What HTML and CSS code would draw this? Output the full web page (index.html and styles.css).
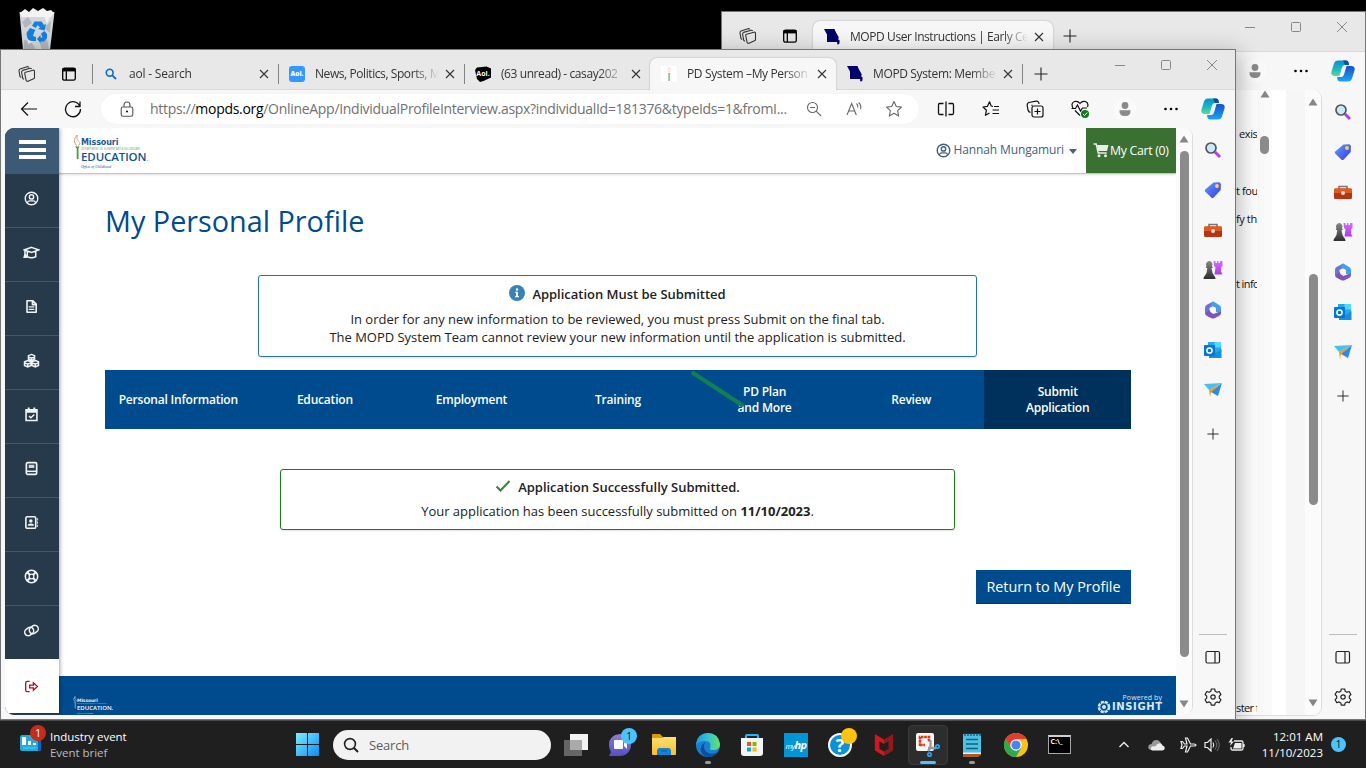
FILE: index.html
```html
<!DOCTYPE html>
<html lang="en">
<head>
<meta charset="utf-8">
<title>PD System – My Personal Profile</title>
<link rel="stylesheet" href="styles.css">
</head>
<body>
<svg class="defs" aria-hidden="true">
  <defs>
    <linearGradient id="gTeal" x1="0" y1="0" x2="0" y2="1"><stop offset="0" stop-color="#0a8fd0"/><stop offset=".5" stop-color="#16b4c8"/><stop offset="1" stop-color="#5fd990"/></linearGradient>
    <linearGradient id="gBlue" x1="0" y1="0" x2="0" y2="1"><stop offset="0" stop-color="#1b50c8"/><stop offset="1" stop-color="#16a7f5"/></linearGradient>
    <linearGradient id="gTag" x1="0" y1="0" x2="1" y2="1"><stop offset="0" stop-color="#5fa2ff"/><stop offset="1" stop-color="#3a35e0"/></linearGradient>
    <linearGradient id="gWin" x1="0" y1="0" x2="1" y2="1"><stop offset="0" stop-color="#80ecff"/><stop offset="1" stop-color="#0a8cf5"/></linearGradient>
    <linearGradient id="gEdge" x1="0" y1="0" x2="1" y2="0"><stop offset="0" stop-color="#1a9be0"/><stop offset=".5" stop-color="#30c3d5"/><stop offset="1" stop-color="#6be35a"/></linearGradient>
    <linearGradient id="gRook" x1="0" y1="0" x2="0" y2="1"><stop offset="0" stop-color="#d56bff"/><stop offset="1" stop-color="#a93bf0"/></linearGradient>
    <linearGradient id="gPawn" x1="0" y1="0" x2="0" y2="1"><stop offset="0" stop-color="#888"/><stop offset="1" stop-color="#2e2e2e"/></linearGradient>
    <linearGradient id="gFold" x1="0" y1="0" x2="0" y2="1"><stop offset="0" stop-color="#ffdf70"/><stop offset="1" stop-color="#f9bd2c"/></linearGradient>
    <linearGradient id="gChat" x1="0" y1="0" x2="0" y2="1"><stop offset="0" stop-color="#8b7fd0"/><stop offset="1" stop-color="#5350c8"/></linearGradient>
  </defs>
  <symbol id="workspaces" viewBox="0 0 18 18"><g fill="none" stroke="#333" stroke-width="1.1" stroke-linejoin="round"><path d="M7.5 7.2 15 5.2q1.5-.3 1.500 1.200v6q0 1-1 1.400L10 16.300q-1.500.3-1.900-1L6.700 8.500q-.2-1 .8-1.300Z"/><path d="M6 14.300 4.800 13.500 3.600 7.300q-.2-1.500 1-1.900L12 3.300q1-.2 1.700.6"/><path d="M3.300 12.500 2 11.600 1 6q-.1-1.600 1-2L9 1.700q1-.2 1.800.6"/></g></symbol>
  <symbol id="tabpanel" viewBox="0 0 16 16"><rect x="1.700" y="2.200" width="12.600" height="12" rx="1.800" fill="none" stroke="#000" stroke-width="1.300"/><path d="M1.500 2h13v3.400h-13Z"/><path d="M5.300 5v9" stroke="#000" stroke-width="1.300"/></symbol>
  <symbol id="x" viewBox="0 0 10 10"><path d="m1 1 8 8M9 1 1 9" stroke="#333" stroke-width="1.100"/></symbol>
  <symbol id="wx" viewBox="0 0 12 12"><path d="m1 1 10 10M11 1 1 11" stroke="#888" stroke-width="1"/></symbol>
  <symbol id="wmax" viewBox="0 0 12 12"><rect x="1.500" y="1.500" width="9" height="9" rx="1" fill="none" stroke="#888"/></symbol>
  <symbol id="wmin" viewBox="0 0 12 12"><path d="M1 6.500h10" stroke="#888"/></symbol>
  <symbol id="plus" viewBox="0 0 14 14"><path d="M7 .5v13M.5 7h13" stroke="#222" stroke-width="1.100"/></symbol>
  <symbol id="lens" viewBox="0 0 12 12"><circle cx="4.700" cy="4.700" r="3.400" fill="none" stroke="#0b6cc8" stroke-width="1.600"/><path d="m7.300 7.300 3.700 3.700" stroke="#0b6cc8" stroke-width="1.800"/></symbol>
  <symbol id="mo" viewBox="0 0 16 16"><path d="M0 0h10.500l1 2.500 3.200 5.800-.5 2 1.500 1.500-.4 3-1.500 1-.8-1.600.3-1.100H3V5.500Z" fill="#02026b"/></symbol>
  <symbol id="torch" viewBox="0 0 16 16"><path d="M0 0h16v16H0Z" fill="#fff"/><path d="M8 1.500q-2.500 2.500-.2 4.800M8.300 1.500q2.200 2.500.2 4.800" fill="none" stroke="#f3cfba" stroke-width=".8"/><path d="M6.800 7h2.700L9 8.500V15H7.300V8.500Z" fill="#8cc784"/></symbol>
  <symbol id="aolhat" viewBox="0 0 16 16"><path d="M2 1.500 11.500.5 16 2.500v9l-7.500 3.500L5 16l-3-3L0 4Z"/></symbol>
  <symbol id="back" viewBox="0 0 18 18"><path d="M17 9H2m6-6.500L1.500 9 8 15.500" fill="none" stroke="#111" stroke-width="1.200"/></symbol>
  <symbol id="reload" viewBox="0 0 18 18"><path d="M16 6.500A7.500 7.500 0 1 0 16.500 9M16 1.500v5h-5" fill="none" stroke="#111" stroke-width="1.300"/></symbol>
  <symbol id="lock" viewBox="0 0 14 16"><rect x="1.200" y="6" width="11.600" height="9.200" rx="1.700" fill="none" stroke="#555" stroke-width="1.100"/><path d="M4 6V4q0-3 3-3t3 3v2" fill="none" stroke="#555" stroke-width="1.100"/><circle cx="7" cy="10.500" r="1"/></symbol>
  <symbol id="zoomout" viewBox="0 0 16 16"><g fill="none" stroke="#666" stroke-width="1.100"><circle cx="6.500" cy="6.500" r="5"/><path d="m10.200 10.200 4.800 4.800M4 6.500h5"/></g></symbol>
  <symbol id="read" viewBox="0 0 17 16"><g fill="none" stroke="#666" stroke-width="1.100"><path d="M1 14 5.700 2.500 10.300 14M2.700 10h6M10.500 2.500q1.800 1.800 1.300 4.200M12.600 1.500q3 2.700 2 6.700"/></g></symbol>
  <symbol id="star" viewBox="0 0 18 18"><path d="m9 1.500 2.300 5 5.200.6-3.900 3.600 1.100 5.300L9 13.300 4.300 16l1.100-5.300L1.500 7.100l5.200-.6Z" fill="none" stroke="#666" stroke-width="1.100" stroke-linejoin="round"/></symbol>
  <symbol id="split" viewBox="0 0 18 16"><path d="M6.500 2.500h-4Q1.500 2.500 1.500 4v8q0 1.500 1 1.500h4M11.500 2.500h4q1 0 1 1.500v8q0 1.500-1 1.500h-4M9 .5v15" fill="none" stroke="#111" stroke-width="1.300"/></symbol>
  <symbol id="favs" viewBox="0 0 18 18"><path d="M11 6.500 9.200 6 7.500 1.800 5.500 6.300 1 7l3.400 3.300-1 5L7.500 13M12 6.500h5M10.500 10h6.500M10.500 13.500h6.500" fill="none" stroke="#111" stroke-width="1.200" stroke-linejoin="round"/></symbol>
  <symbol id="coll" viewBox="0 0 18 18"><g fill="none" stroke="#111" stroke-width="1.200"><rect x="6" y="6" width="11" height="11" rx="2"/><path d="M11.500 8.500v6M8.500 11.500h6M4.500 12.500Q2.500 12 2 10L1.200 5.500Q1 3 3 2.500l7-1.300q2-.2 2.800 1.500L13 4M6 6V4.800"/></g></symbol>
  <symbol id="health" viewBox="0 0 18 18"><path d="M2 8Q-.500 3 3.500 1.500 7 .7 9 3.500q2-2.800 5.500-2 3.500 1.500 2 5.500M4 10.500l5 5M.5 8.500h4L6.500 5l3 6 2-3h4.500" fill="none" stroke="#111" stroke-width="1.200"/><circle cx="14" cy="14" r="4" fill="#147a1e"/><path d="m12 14 1.500 1.500 2.700-3" fill="none" stroke="#fff" stroke-width="1"/></symbol>
  <symbol id="avatar" viewBox="0 0 24 24"><circle cx="12" cy="12" r="11.500" fill="#fafafa"/><circle cx="12" cy="8.500" r="3.400" fill="#8a8a8a"/><path d="M6.500 13.200h11q.5 5.800-5.500 5.800t-5.500-5.800Z" fill="#8a8a8a"/></symbol>
  <symbol id="dots" viewBox="0 0 16 4"><circle cx="2.500" cy="2" r="1.300"/><circle cx="8" cy="2" r="1.300"/><circle cx="13.500" cy="2" r="1.300"/></symbol>
  <symbol id="copilot" viewBox="0 0 24 24"><path d="M7 1.500h8q2 0 2.500 2l.5 2.500h-4q-2.300 0-3 2.500L8.500 17H4Q-.500 17 .5 12.500L3 4.500Q4 1.500 7 1.500Z" fill="url(#gTeal)"/><path d="M17 22.500H9q-2 0-2.500-2L6 18h4q2.300 0 3-2.500L15.500 7H20q4.500 0 3.500 4.500L21 19.500q-1 3-4 3Z" fill="url(#gBlue)"/><path d="M12 1.500h3.500q1.500 0 2 2L18 6h-4Z" fill="#174a9e"/></symbol>
  <symbol id="s-search" viewBox="0 0 18 18"><path d="m11 11 5 5" stroke="#b63cf5" stroke-width="3"/><circle cx="7" cy="7" r="5" fill="#c9e9fb" stroke="#555" stroke-width="1.700"/></symbol>
  <symbol id="s-tag" viewBox="0 0 18 18"><path d="M9.500 1.500 15.500 1.200 17 3l-.3 6-7.200 7.700q-1 .8-2 0L1.200 10.500q-.8-1 0-2Z" fill="url(#gTag)"/><circle cx="13" cy="5" r="1.900" fill="#ffd34d"/></symbol>
  <symbol id="s-box" viewBox="0 0 20 16"><path d="M6 5V2.500h8V5" fill="none" stroke="#777" stroke-width="1.600"/><rect x="1" y="4.500" width="18" height="10.500" rx="1.500" fill="#b83410"/><path d="M1 5.500q0-1 1-1h16q1 0 1 1V9H1Z" fill="#e15a20"/><circle cx="10" cy="9" r="2" fill="#ddd"/></symbol>
  <symbol id="s-chess" viewBox="0 0 19 20"><path d="M10 1h2v2h1.500V1H15v2h1.500V1H19v5l-1.300 1v5l1.300 2.500h-8L12 7l-1.500-1Z" fill="url(#gRook)"/><path d="M3 6a3.200 3.200 0 1 1 5.500 0l.8 2H8l1 5 1.500 2.500q1.500 1 1.500 3.500H0q0-2.500 1.500-3.500L3 13l.8-5H2.200Z" fill="url(#gPawn)"/></symbol>
  <symbol id="s-365" viewBox="0 0 18 18"><path d="M9 .5 2.500 4Q1 5 1 7v5l4.500 2.800V7L13 3Z" fill="#6d72d8"/><path d="m9 .5 6.500 3.700Q17 5 17 7v5.500L12 11V7L6.500 4Z" fill="#43a0e8"/><path d="M1 12.500 5.500 9 9 13l8-2.500v2Q16.500 14 15 15l-4.500 2.300q-1.500.6-3 0L3 15q-1.600-1-2-2.500Z" fill="#8055b8"/><circle cx="9" cy="9" r="3" fill="#f7f7f7"/></symbol>
  <symbol id="s-outlook" viewBox="0 0 18 18"><path d="M4 1h13v14H4Z" fill="#28a8ea"/><path d="M10.500 1H17v5.500h-6.500Z" fill="#50d9ff"/><path d="m5 8 7 4 5.500-4v9H5Z" fill="#1490df"/><rect x="0" y="4" width="11" height="11" rx="1" fill="#0078d4"/><circle cx="5.500" cy="9.500" r="2.600" fill="none" stroke="#fff" stroke-width="1.500"/></symbol>
  <symbol id="s-plane" viewBox="0 0 18 16"><path d="M0 2 18 1 5 8Z" fill="#46c0f0"/><path d="M5 8 18 1 7 10l-1 5Z" fill="#f29a1a"/><path d="m7 10 11-9-4 13Z" fill="#2d8ae8"/></symbol>
  <symbol id="panel" viewBox="0 0 16 16"><rect x="1" y="2.500" width="13.500" height="11.500" rx="1.500" fill="none" stroke="#222" stroke-width="1.200"/><path d="M10 2.500V14" stroke="#222" stroke-width="1.200"/></symbol>
  <symbol id="gear" viewBox="0 0 18 18"><path d="M7.300 1h3.400l.5 2.300 1.800 1 2.200-.8 1.700 3-1.600 1.600v2l1.600 1.600-1.700 3-2.200-.8-1.800 1-.5 2.300H7.300l-.5-2.300-1.800-1-2.200.8-1.700-3 1.600-1.600v-2L1.100 6.500l1.700-3 2.200.8 1.800-1Z" fill="none" stroke="#222" stroke-width="1.200" stroke-linejoin="round"/><circle cx="9" cy="9" r="2.200" fill="none" stroke="#222" stroke-width="1.200"/></symbol>
  <symbol id="up" viewBox="0 0 10 8"><path d="M5 .5 9.500 7.500h-9Z" fill="#868686"/></symbol>
  <symbol id="down" viewBox="0 0 10 8"><path d="M5 7.500 9.500.5h-9Z" fill="#868686"/></symbol>
  <symbol id="n-user" viewBox="0 0 16 16"><g fill="none" stroke="currentColor" stroke-width="1.500"><circle cx="8" cy="8" r="6.700"/><circle cx="8" cy="6.300" r="2.300"/><path d="M3.500 12.500q.8-2 2.700-2h3.600q1.900 0 2.700 2"/></g></symbol>
  <symbol id="n-grad" viewBox="0 0 18 16"><path d="m9 2.500 7.800 2.800L9 8 1.200 5.300ZM4.500 7v5.500q4.500 2 9 0V7M2 6v4l-.8 3h2L2.500 10" fill="none" stroke="currentColor" stroke-width="1.600"/></symbol>
  <symbol id="n-doc" viewBox="0 0 16 16"><path d="M3.200 1.800h6L13 5.500v8.700H3.200ZM9 2v4h4" fill="none" stroke="currentColor" stroke-width="1.700" stroke-linejoin="round"/><path d="M5 8.500h6M5 11h6" stroke="currentColor" stroke-width="1.300"/></symbol>
  <symbol id="n-cubes" viewBox="0 0 18 16"><g fill="none" stroke="currentColor" stroke-width="1.500"><path d="m9 1.500 3.300 1.300v3.700L9 8 5.700 6.500V2.800ZM5.700 4.400 9 5.300l3.300-.9M9 5v3M5 8l3.500 1.300v4L5 14.800l-3.500-1.500v-4ZM1.500 10.700l3.500 1 3.500-1M5 11.500v3M13 8l3.500 1.300v4L13 14.800l-3.500-1.500v-4ZM9.500 10.700l3.500 1 3.500-1M13 11.500v3"/></g></symbol>
  <symbol id="n-cal" viewBox="0 0 16 16"><path d="M2.200 3h11.600v11.400H2.200Z" fill="none" stroke="currentColor" stroke-width="1.700"/><path d="M2 2.500h12V6H2ZM4 .5h2V3H4ZM10 .5h2V3h-2Z" fill="currentColor"/><path d="m5.300 9.500 2 2 3.700-3.600" fill="none" stroke="currentColor" stroke-width="1.500"/></symbol>
  <symbol id="n-book" viewBox="0 0 16 16"><rect x="2.500" y="1.800" width="11" height="12.400" rx="1.500" fill="none" stroke="currentColor" stroke-width="1.800"/><path d="M5 4h6v3.500H5Z" fill="currentColor" opacity=".85"/><path d="M2.500 11h11" stroke="currentColor" stroke-width="1.600"/></symbol>
  <symbol id="n-addr" viewBox="0 0 16 16"><rect x="2" y="1.800" width="10.500" height="12.400" rx="1.500" fill="none" stroke="currentColor" stroke-width="1.700"/><circle cx="7.300" cy="6.300" r="1.900" fill="currentColor"/><path d="M4 11.500q0-2.500 3.300-2.500t3.300 2.500Z" fill="currentColor"/><path d="M14.300 3.500v2.300M14.300 7v2.300M14.300 10.500v2.300" stroke="#d9cdb0" stroke-width="1.400"/></symbol>
  <symbol id="n-ring" viewBox="0 0 16 16"><g fill="none" stroke="currentColor"><circle cx="8" cy="8" r="6.600" stroke-width="1.600"/><circle cx="8" cy="8" r="2.500" stroke-width="1.300"/><path d="m3.300 3.300 3 3M12.700 3.300l-3 3M3.300 12.700l3-3M12.700 12.700l-3-3" stroke-width="2.200"/></g></symbol>
  <symbol id="n-link" viewBox="0 0 18 16"><g fill="none" stroke="currentColor" stroke-width="1.600"><rect x="6.500" y="3.200" width="10" height="7.500" rx="3.700" transform="rotate(-35 11.500 7)"/><rect x="1.500" y="5.300" width="10" height="7.500" rx="3.700" transform="rotate(-35 6.500 9)"/></g></symbol>
  <symbol id="n-out" viewBox="0 0 16 16"><path d="M6 2.500H3.500Q1.800 2.500 1.800 4.200v7.600q0 1.700 1.700 1.700H6M6 6.500h4V4l4.300 4L10 12V9.500H6Z" fill="none" stroke="currentColor" stroke-width="1.400"/></symbol>
  <symbol id="cart" viewBox="0 0 16 15"><path d="M.5 1h2.700l2 9h8.500" fill="none" stroke="#e6efe3" stroke-width="1.500"/><path d="M4 2h11.500l-1.500 6H5.200Z" fill="#e6efe3"/><circle cx="6" cy="12.700" r="1.500" fill="#e6efe3"/><circle cx="12.500" cy="12.700" r="1.500" fill="#e6efe3"/></symbol>
  <symbol id="logotorch" viewBox="0 0 8 28"><path d="M4 1Q-1 7 3.500 11.500M4.500 1q-2 4 1 6.500T5 11.500" fill="none" stroke="#d3a57b" stroke-width="1"/><path d="M1.800 12.500h4.700l-1 2V25H3.700V14.500Z" fill="#4b9d3e"/></symbol>
  <symbol id="w-torch" viewBox="0 0 8 28"><path d="M4 1Q-1 7 3.500 11.500M4.500 1q-2 4 1 6.500T5 11.500" fill="none" stroke="#b9cde0" stroke-width="1.300"/><path d="M1.800 12.500h4.700l-1 2V25H3.500V14.500Z" fill="#7fa5c8"/></symbol>
</svg>

<main class="desktop">
  <svg class="bin" viewBox="0 0 38 42"><path d="M1.500 4 5 42h27l4.500-38Z" fill="#d3d7d9"/><path d="m2 5 5-4 4 3 4-4 5 3 5-3 4 3 4-1 3 3-3 4H4Z" fill="#f3f4f5"/><path d="m4 14 6-5 4 6-7 5Zm22 6 7-7-1 12ZM6 32l7 1 5 9H6Zm15 1 8-2 2 11h-7Z" fill="#b1b7bb"/><path d="m9 28 5-3 2 8-6 3Zm17-20 6 1-3 7Z" fill="#eef0f1"/><path d="m14 18 2.500-4.500h7L26 17l2-1-1.500 6.500L20 21l2-1.500-2.500-2.500-1.500 3ZM8.500 25l1-1.500L12 20l5.500 2-1.200 2-1.300 4 3 1v4h-4.500q-4-.5-4.500-4.500Zm18-2L29 26v4l-3 3.500h-3.500V35L19 31l3.500-4v2.500h2l-1.500-4Z" fill="#1380e0"/></svg>

  <section class="window rear">
    <div class="tabstrip">
      <div class="lead"><svg class="i18"><use href="#workspaces"/></svg><svg class="i16"><use href="#tabpanel"/></svg></div>
      <div class="tab active"><svg class="i16"><use href="#mo"/></svg><span class="tt"><span class="t5">MOPD User Instructions | Early Ce</span></span><svg class="i10"><use href="#x"/></svg></div>
      <svg class="newtab"><use href="#plus"/></svg>
      <div class="controls"><svg><use href="#wmin"/></svg><svg><use href="#wmax"/></svg><svg><use href="#wx"/></svg></div>
    </div>
    <div class="toolbar"><span class="c46"><svg class="i24"><use href="#avatar"/></svg></span><span class="c46"><svg class="idots"><use href="#dots"/></svg></span><span class="c38"><svg class="i24"><use href="#copilot"/></svg></span></div>
    <div class="body">
      <div class="rearpage">
        <div class="snips"><p class="p1">exis</p><p class="p2">t fou</p><p class="p3">fy th</p><p class="p4">t info</p><p class="p5">ster f</p></div>
        <div class="innerscroll"><svg class="arrow"><use href="#up"/></svg><i></i></div>
        <div class="gutter"></div>
        <div class="scroll"><svg class="arrow"><use href="#up"/></svg><i></i><svg class="arrow"><use href="#down"/></svg></div>
      </div>
      <aside class="edgebar"><svg class="i18"><use href="#s-search"/></svg><svg class="i18"><use href="#s-tag"/></svg><svg class="i20"><use href="#s-box"/></svg><svg class="i20"><use href="#s-chess"/></svg><svg class="i18"><use href="#s-365"/></svg><svg class="i18"><use href="#s-outlook"/></svg><svg class="i18"><use href="#s-plane"/></svg><svg class="i12"><use href="#plus"/></svg><span class="rule"></span><svg class="i16"><use href="#panel"/></svg><svg class="i18 gear"><use href="#gear"/></svg></aside>
    </div>
  </section>

  <section class="window front">
    <div class="tabstrip">
      <div class="lead"><svg class="i18"><use href="#workspaces"/></svg><svg class="i16"><use href="#tabpanel"/></svg></div>
      <div class="tab sep"><svg class="i12 fav"><use href="#lens"/></svg><span class="tt"><span class="t1">aol - Search</span></span><svg class="i10"><use href="#x"/></svg></div>
      <div class="tab sep"><span class="aol">Aol.</span><span class="tt"><span class="t2">News, Politics, Sports, M</span></span><svg class="i10"><use href="#x"/></svg></div>
      <div class="tab sep"><span class="aolm"><svg class="i16"><use href="#aolhat"/></svg><b>Aol.</b></span><span class="tt"><span class="t3">(63 unread) - casay202</span></span><svg class="i10"><use href="#x"/></svg></div>
      <div class="tab active"><svg class="i16"><use href="#torch"/></svg><span class="tt"><span class="t4">PD System –My Person</span></span><svg class="i10"><use href="#x"/></svg></div>
      <div class="tab"><svg class="i16"><use href="#mo"/></svg><span class="tt"><span class="t6">MOPD System: Membe</span></span><svg class="i10"><use href="#x"/></svg></div>
      <span class="tabend"></span>
      <svg class="newtab"><use href="#plus"/></svg>
      <div class="controls"><svg><use href="#wmin"/></svg><svg><use href="#wmax"/></svg><svg><use href="#wx"/></svg></div>
    </div>
    <div class="toolbar">
      <span class="c56"><svg class="i18"><use href="#back"/></svg></span><span class="c44 reload"><svg class="i18"><use href="#reload"/></svg></span>
      <div class="address"><svg class="lock"><use href="#lock"/></svg><span class="url">https://<b>mopds.org</b>/OnlineApp/IndividualProfileInterview.aspx?individualId=181376&amp;typeIds=1&amp;fromI...</span><span class="c40"><svg class="i16"><use href="#zoomout"/></svg></span><span class="c40"><svg class="i17"><use href="#read"/></svg></span><span class="c40"><svg class="i18"><use href="#star"/></svg></span></div>
      <div class="tools"><span class="c44"><svg class="i18"><use href="#split"/></svg></span><span class="c44"><svg class="i18"><use href="#favs"/></svg></span><span class="c44"><svg class="i18"><use href="#coll"/></svg></span><span class="c44"><svg class="i18"><use href="#health"/></svg></span><span class="c46"><svg class="i24"><use href="#avatar"/></svg></span><span class="c46"><svg class="idots"><use href="#dots"/></svg></span><span class="c38"><svg class="i24"><use href="#copilot"/></svg></span></div>
    </div>
    <div class="body">
      <div class="page">
        <nav class="sidenav">
          <div class="burger"><i></i><i></i><i></i></div>
          <a><svg><use href="#n-user"/></svg></a><a><svg class="wide"><use href="#n-grad"/></svg></a><a><svg><use href="#n-doc"/></svg></a><a><svg class="wide"><use href="#n-cubes"/></svg></a><a><svg><use href="#n-cal"/></svg></a><a><svg><use href="#n-book"/></svg></a><a><svg><use href="#n-addr"/></svg></a><a><svg><use href="#n-ring"/></svg></a><a><svg class="wide"><use href="#n-link"/></svg></a><a class="logout"><svg><use href="#n-out"/></svg></a>
        </nav>
        <div class="content">
          <header class="top">
            <div class="logo"><svg><use href="#logotorch"/></svg><div class="words"><span class="l1">Missouri</span><span class="l2">DEPARTMENT OF ELEMENTARY &amp; SECONDARY</span><span class="l3">EDUCATION<small>.</small></span><span class="l4">Office of Childhood</span></div></div>
            <div class="user"><svg class="uicon"><use href="#n-user"/></svg><span>Hannah Mungamuri</span><i></i></div>
            <div class="cart"><svg><use href="#cart"/></svg><span>My Cart (0)</span></div>
          </header>
          <div class="main">
            <h1><span>My Personal Profile</span></h1>
            <div class="alert info">
              <h2><svg viewBox="0 0 16 16"><circle cx="8" cy="8" r="8" fill="#3a82b5"/><path d="M6.300 6.700h2.600v4.200h1v1.300H6.100v-1.300h1V8h-.8Z" fill="#fff"/><circle cx="8" cy="4.500" r="1.200" fill="#fff"/></svg><span>Application Must be Submitted</span></h2>
              <p>In order for any new information to be reviewed, you must press Submit on the final tab.<br>The MOPD System Team cannot review your new information until the application is submitted.</p>
            </div>
            <div class="steps"><span>Personal Information</span><span>Education</span><span>Employment</span><span>Training</span><span>PD Plan<br>and More</span><span>Review</span><span class="on">Submit<br>Application</span>
              <svg class="stroke" viewBox="0 0 54 38"><path d="M2 3 51 35" stroke="#0f8052" stroke-width="4" stroke-linecap="round"/></svg>
            </div>
            <div class="alert ok">
              <h2><svg viewBox="0 0 16 16"><path d="m1.500 8.500 4 4L14.500 3" fill="none" stroke="#3a833a" stroke-width="2"/></svg><span>Application Successfully Submitted.</span></h2>
              <p>Your application has been successfully submitted on <b>11/10/2023</b>.</p>
            </div>
            <div class="actions"><button>Return to My Profile</button></div>
          </div>
          <footer class="foot">
            <div class="logo small"><svg><use href="#w-torch"/></svg><div class="words"><span class="l1">Missouri</span><span class="l2">DEPARTMENT OF ELEMENTARY &amp; SECONDARY</span><span class="l3">EDUCATION.</span><span class="l4">Office of Childhood</span></div></div>
            <div class="insight"><span>Powered by</span><strong><svg viewBox="0 0 14 14"><circle cx="7" cy="7" r="5.300" fill="none" stroke="#dce7f1" stroke-width="2" stroke-dasharray="3.200 1"/><circle cx="7" cy="7" r="4.200" fill="none" stroke="#dce7f1"/><circle cx="7" cy="7" r="2" fill="#dce7f1"/></svg><em>INSIGHT</em></strong></div>
          </footer>
        </div>
        <div class="scroll"><svg class="arrow"><use href="#up"/></svg><i></i><svg class="arrow"><use href="#down"/></svg></div>
      </div>
      <aside class="edgebar"><svg class="i18"><use href="#s-search"/></svg><svg class="i18"><use href="#s-tag"/></svg><svg class="i20"><use href="#s-box"/></svg><svg class="i20"><use href="#s-chess"/></svg><svg class="i18"><use href="#s-365"/></svg><svg class="i18"><use href="#s-outlook"/></svg><svg class="i18"><use href="#s-plane"/></svg><svg class="i12"><use href="#plus"/></svg><span class="rule"></span><svg class="i16"><use href="#panel"/></svg><svg class="i18 gear"><use href="#gear"/></svg></aside>
    </div>
  </section>

  <footer class="taskbar">
    <div class="widget"><span class="wicon"><svg viewBox="0 0 24 18"><rect x="1" y="1" width="21" height="16" rx="2" fill="#28a8d8"/><path d="M19 1h3v16h-3Z" fill="#1262b8"/><path d="M3 3h4v8H3ZM9 7h3v4H9ZM14 9h3v2h-3Z" fill="#fff"/><path d="M4 14h13" stroke="#18d8f0" stroke-width="1.500"/></svg><b class="badge red">1</b></span><div class="wtext"><span>Industry event</span><span>Event brief</span></div></div>
    <svg class="start" viewBox="0 0 23 23"><path d="M0 0h11v11H0ZM12 0h11v11H12ZM0 12h11v11H0ZM12 12h11v11H12Z" fill="url(#gWin)"/></svg>
    <div class="search"><svg viewBox="0 0 16 16"><circle cx="7" cy="7" r="5.400" fill="none" stroke="#222" stroke-width="1.600"/><path d="m11 11 4 4" stroke="#222" stroke-width="2"/></svg><span>Search</span></div>
    <div class="apps">
      <span><svg viewBox="0 0 24 24"><path d="M6 1h18v16H6Z" fill="#f3f3f3"/><path d="M0 7h18v16H0Z" fill="#666"/><path d="M6 7h12v10H6Z" fill="#aaa"/></svg></span>
      <span><svg viewBox="0 0 24 24"><path d="M12 1a11 11 0 1 1 0 22H1l2-4Q1 16 1 12 1 2 12 1Z" fill="url(#gChat)"/><rect x="6" y="7" width="9" height="9" rx="1" fill="#fff"/><path d="m16 10 3-3v9l-3-3Z" fill="#fff"/></svg><b class="badge blue">1</b></span>
      <span><svg viewBox="0 0 24 24"><path d="M0 2q0-1 1-1h7l3 3h13v8H0Z" fill="#d99a08"/><path d="M0 5h10l2-1h12v17q0 1-1 1H1q-1 0-1-1Z" fill="url(#gFold)"/><path d="M5 22v-4q0-3 3-3h8q3 0 3 3v4Z" fill="#1680d2"/><path d="M9 18h6" stroke="#0d5c9e"/></svg></span>
      <span class="run"><svg viewBox="0 0 24 24"><circle cx="12" cy="12" r="12" fill="#1a7fd3"/><path d="M0 11Q2 0 12 0t12 11q0 6-7 6-4 0-3-2 2-7-5-7Q3 8 0 12Z" fill="url(#gEdge)"/><path d="M8 13q0 6 6 7.500 4 1 8-2-4 5.500-10 5.500Q5 23 4.500 16 5 11 9.500 9.500 8 11 8 13Z" fill="#0c4f9c"/></svg></span>
      <span><svg viewBox="0 0 24 24"><path d="M6 8V3q0-1 1-1h10q1 0 1 1v5" fill="none" stroke="#26b5f0" stroke-width="2.200"/><path d="M1 5h22v15q0 3-3 3H4q-3 0-3-3Z" fill="#f4f4f4"/><path d="M7 9h4v4H7Z" fill="#f25022"/><path d="M12.500 9h4v4h-4Z" fill="#7fba00"/><path d="M7 14.500h4v4H7Z" fill="#00a4ef"/><path d="M12.500 14.500h4v4h-4Z" fill="#ffb900"/></svg></span>
      <span><b class="hp">my<i>hp</i></b></span>
      <span><b class="help">?</b><b class="badge yellow"></b></span>
      <span><svg viewBox="0 0 24 24"><path d="m2 0 10 6v5L7 8v8l5 3v5L2 18Z" fill="#d3171e"/><path d="m22 0-10 6v5l5-3v8l-5 3v5l10-6Z" fill="#8e1a1a"/></svg></span>
      <span class="current"><svg viewBox="0 0 24 24"><rect x="0" y="0" width="18" height="18" rx="2" fill="#f5f5f5"/><path d="M4 13V4h9v5M4 12h5" fill="none" stroke="#d83b16" stroke-width="2.600" stroke-dasharray="2.700 .6"/><path d="M14.500 7v8L12 18M12 15h8" stroke="#999" stroke-width="2.300" fill="none"/><g fill="#1f1f1f" stroke="#2aa3e8" stroke-width="1.800"><circle cx="21.500" cy="13.500" r="1.700"/><circle cx="13.500" cy="21.500" r="1.700"/></g></svg></span>
      <span class="run"><svg viewBox="0 0 24 24"><path d="M3 1h18v21H3Z" fill="#4cc2e4"/><path d="M3 20h18v2l-3 2H3Z" fill="#b15a24"/><path d="M3 19.500h18V21H3Z" fill="#f4ece6"/><path d="M6 6.500h12M6 11h12M6 15.500h12" stroke="#14607c" stroke-width="1.500"/><path d="M5 0v3M8 0v3M11 0v3M14 0v3M17 0v3M20 0v3" stroke="#17506b" stroke-width="1.300"/></svg></span>
      <span><svg viewBox="0 0 24 24"><circle cx="12" cy="12" r="12" fill="#fbc116"/><path d="M12 12 6.800 15 1.600 6A12 12 0 0 1 22.400 6H12Z" fill="#e33b2e"/><path d="M1.600 6A12 12 0 0 0 12 24l5.200-9L12 12 6.800 15Z" fill="#2da94f"/><circle cx="12" cy="12" r="5.800" fill="#fff"/><circle cx="12" cy="12" r="4.600" fill="#4285f4"/></svg></span>
      <span><b class="cmd"><i>C:\_</i></b></span>
    </div>
    <div class="tray">
      <svg class="chev" viewBox="0 0 12 12"><path d="m1.500 8 4.500-4.500L10.500 8" fill="none" stroke="#eee" stroke-width="1.400"/></svg>
      <svg class="cloud" viewBox="0 0 17 12"><path d="M3 11Q0 10.500.3 7.800.7 5 3.500 5 5 .8 8.500 1q3.500.3 4.500 4Z" fill="#999"/><path d="M4 11.500q-2-1-1-3 1.500-2 4-1 3-4 6-3 1 .7 1.500 2 2.500.5 2.300 2.800-.3 2.200-2.800 2.200Z" fill="#eee"/></svg>
      <svg class="air" viewBox="0 0 17 16"><path d="M1 4.500h1.500L4.500 7H7L5.500 1h2L10.500 7H14q2 0 2 1t-2 1h-3.500l-3 6h-2L7 9H4.500l-2 2.500H1L2 8Z" fill="none" stroke="#eee" stroke-width="1.200"/></svg>
      <svg class="vol" viewBox="0 0 17 14"><path d="M1 4.500h2.500L7 1v12L3.500 9.500H1Z" fill="none" stroke="#eee" stroke-width="1.200"/><path d="M9 4.500q1.500 2.500 0 5" fill="none" stroke="#eee" stroke-width="1.100"/><path d="M11 2.500q3.500 4.500 0 9M13 1q4.500 6 0 12" fill="none" stroke="#666" stroke-width="1.100"/></svg>
      <svg class="bat" viewBox="0 0 17 14"><path d="M6 3h7.500q1.500 0 1.500 1.500v6q0 1.500-1.500 1.500h-9Q3 12 3 10.500V9M16 6v3" fill="none" stroke="#eee" stroke-width="1.300"/><path d="M7 5h6.500v5.500H5Z" fill="#eee"/><path d="M3.500 0 .5 4.500H3L2 8l4-4.500H3.500L5 0Z" fill="#eee"/></svg>
      <div class="clock"><span>12:01 AM</span><span>11/10/2023</span></div>
      <b class="note">1</b>
    </div>
  </footer>
</main>
</body>
</html>
```
FILE: styles.css
```css
* { box-sizing: border-box; }
body { margin: 0; background: #000; font-family: "Open Sans", "Noto Sans", sans-serif; color: #222; }
svg { display: block; flex: none; }
p, h1, h2 { margin: 0; }
.defs { position: absolute; width: 0; height: 0; }
.desktop { position: relative; width: 1366px; height: 768px; overflow: hidden; background: #000; }
.bin { position: absolute; left: 18px; top: 8px; width: 38px; height: 42px; }

.i10 { width: 10px; height: 10px; }
.i12 { width: 12px; height: 12px; }
.i16 { width: 16px; height: 16px; }
.i17 { width: 17px; height: 16px; }
.i18 { width: 18px; height: 18px; }
.i20 { width: 20px; height: 19px; }
.i24 { width: 24px; height: 24px; }
.idots { width: 16px; height: 4px; }

/* Browser windows */
.window { position: absolute; display: flex; flex-direction: column; background: #f7f7f7; border: 1px solid #767676; }
.rear { left: 721px; top: 11px; width: 645px; height: 709px; }
.front { left: 0; top: 49px; width: 1236px; height: 671px; box-shadow: 4px 4px 22px rgba(0, 0, 0, .28); }
.tabstrip { display: flex; height: 40px; flex: none; align-items: flex-end; background: #e8e8e8; border-bottom: 1px solid #d9d9d9; }
.lead { width: 91px; height: 32px; margin-bottom: -1px; display: flex; align-items: center; gap: 25px; padding-left: 17px; }
.tab { position: relative; width: 186px; height: 32px; margin-bottom: -1px; padding: 0 9.500px 0 11px; display: flex; align-items: center; }
.tab .fav { margin: 0 2px 0 2px; }
.tab.active { background: #f7f7f7; border-radius: 7px 7px 0 0; box-shadow: 0 0 2px rgba(0, 0, 0, .28); clip-path: inset(-3px -3px 0 -3px); }
.tab.sep::before { content: ""; position: absolute; left: 0; top: 6px; width: 1px; height: 20px; background: #848484; }
.tabend { width: 1px; height: 20px; margin-bottom: 5px; background: #848484; }
.tt { flex: 1; min-width: 0; margin: 0 6px 0 10px; overflow: hidden; white-space: nowrap; font-size: 12px; line-height: 20px; color: #333; -webkit-mask-image: linear-gradient(90deg, #000 calc(100% - 26px), transparent); mask-image: linear-gradient(90deg, #000 calc(100% - 26px), transparent); }
.tt span { letter-spacing: -.42px; }
.tt .t1 { letter-spacing: -.2px; }
.tt .t4, .tt .t6 { letter-spacing: -.36px; }
.aol { width: 16px; height: 16px; border-radius: 3px; background: #3399ff; color: #fff; font: 800 6.500px/16px "Open Sans", sans-serif; text-align: center; }
.aolm { display: grid; place-items: center; }
.aolm > * { grid-area: 1 / 1; }
.aolm b { color: #fff; font-size: 7px; line-height: 16px; }
.newtab { width: 14px; height: 14px; margin: 0 0 8px 11px; }
.controls { display: flex; margin-left: auto; align-self: flex-start; height: 30px; align-items: center; gap: 34px; padding-right: 17px; }
.controls svg { width: 12px; height: 12px; }
.rear .lead { padding-left: 17px; gap: 25px; }
.rear .tab { width: 240px; height: 31px; }
.rear .tabstrip .newtab { margin-left: 10px; }

.toolbar { display: flex; align-items: center; height: 38px; flex: none; }
.toolbar > span, .tools > span, .address > span[class^="c"] { display: flex; justify-content: center; align-items: center; flex: none; }
.c38 { width: 38px; } .c40 { width: 40px; } .c44 { width: 44.500px; } .c46 { width: 46px; } .c56 { width: 56px; }
.toolbar .reload { width: 43px; padding-right: 12px; }
.rear .toolbar { justify-content: flex-end; padding-right: 3px; }
.address { display: flex; align-items: center; width: 818px; height: 30px; margin-left: 1px; border-radius: 15px; background: #fff; padding: 0 5px 0 19px; box-shadow: 0 0 1px rgba(0, 0, 0, .08); }
.lock { width: 14px; height: 16px; margin-right: 16px; }
.url { flex: 1; white-space: nowrap; overflow: hidden; font-size: 14px; line-height: 22px; letter-spacing: -.3px; color: #717171; }
.url b { font-weight: 400; color: #000; }
.tools { display: flex; align-items: center; margin-left: 5px; }
.body { display: flex; flex: 1; min-height: 0; }
.edgebar { width: 42px; flex: none; margin-right: 1px; display: flex; flex-direction: column; align-items: center; padding-top: 11.500px; }
.edgebar .i18, .edgebar .i20 { height: 20px; margin-bottom: 20.100px; }
.edgebar .i12 { margin: 7.500px 0 0; }
.rule { width: 28px; height: 1px; background: #bdbdbd; margin-top: auto; }
.edgebar .i16 { margin-top: 14px; }
.edgebar .i18.gear { height: 18px; margin: 23px 0 13px; }
.scroll { width: 16px; display: flex; flex-direction: column; align-items: center; background: #fbfbfb; flex: none; }
.arrow { width: 10px; height: 8px; }
.scroll i, .innerscroll i { width: 9px; border-radius: 5px; background: #8b8b8b; }

/* Rear page */
.rearpage { flex: 1; display: flex; justify-content: flex-end; background: #fff; border-radius: 0 9px 9px 0; border-right: 1px solid #ddd; border-bottom: 1px solid #ddd; margin-bottom: 3px; overflow: hidden; }
.snips { width: 21px; overflow: hidden; font-size: 11px; line-height: 16px; letter-spacing: -.4px; color: #111; white-space: nowrap; padding-top: 36px; }
.p1 { padding-left: 3px; }
.p2 { padding-top: 41px; } .p3 { padding-top: 12px; } .p4 { padding-top: 49px; letter-spacing: -.6px; } .p5 { padding-top: 408px; letter-spacing: -.6px; }
.innerscroll { width: 15px; display: flex; flex-direction: column; align-items: center; background: #fafafa; }
.innerscroll i { height: 18px; margin-top: 38px; }
.gutter { width: 33px; background: linear-gradient(90deg, #fff 42%, #f6f6f6 42%); }
.rear .scroll .arrow:first-child { margin: 8px 0 168px; }
.rear .scroll i { height: 231px; margin-bottom: auto; }
.rear .scroll .arrow:last-child { margin-bottom: 8px; }

/* Front page */
.page { display: flex; width: 1188px; margin: 0 0 4px 4px; border-radius: 9px; overflow: hidden; background: #fff; border-right: 1px solid #ddd; flex: none; }
.front .edgebar { margin-left: -1px; }
.front .scroll .arrow:first-child { margin: 7px 0 8px; }
.front .scroll i { height: 506px; margin-bottom: auto; }
.front .scroll .arrow:last-child { margin-bottom: 7px; }
.sidenav { width: 54px; flex: none; background: #273a4b; box-shadow: 1px 0 4px rgba(0, 0, 0, .35); z-index: 1; }
.burger { height: 46px; background: #3c5a76; display: flex; flex-direction: column; align-items: center; justify-content: center; gap: 3px; padding-bottom: 3px; }
.burger i { width: 27px; height: 4px; background: #fff; }
.burger i + i { margin-top: .5px; }
.sidenav a { height: 54px; display: flex; align-items: center; justify-content: center; padding: 0 1px 4px 0; color: #f1f4f6; border-bottom: 1px solid #3c5a76; }
.sidenav a svg { width: 15px; height: 15px; }
.sidenav a .wide { width: 17px; }
.sidenav .logout { background: #fff; color: #b0102a; border: 0; padding-bottom: 0; margin-top: -1px; }
.content { flex: 1; display: flex; flex-direction: column; }
.top { display: flex; height: 46px; border-bottom: 1px solid #c4c4c4; box-shadow: 0 1px 2px rgba(0, 0, 0, .12); }
.logo { display: flex; width: 110px; padding: 6px 0 0 14px; }
.logo svg { width: 8px; height: 28px; }
.words { display: flex; flex-direction: column; white-space: nowrap; }
.l1 { font: 700 8px/9px "DejaVu Sans", sans-serif; letter-spacing: -.1px; color: #24598f; margin-top: 4px; }
.l2 { font: 400 2.750px/3px "Open Sans", sans-serif; color: #66a95c; margin-top: 1px; }
.l3 { font: 600 11.500px/11px "Open Sans", sans-serif; color: #14508c; letter-spacing: -.1px; }
.l3 small { font-size: 7px; color: #8aa; }
.l4 { font: italic 3.800px/5px "Liberation Serif", serif; color: #14508c; margin-top: 1px; }
.user { margin-left: auto; display: flex; align-items: center; font-size: 12px; color: #44617d; padding: 0 9px 3px 0; letter-spacing: -.13px; }
.uicon { width: 15px; height: 15px; margin: 2px 3px 0 0; }
.user i { width: 0; height: 0; border: 4.500px solid transparent; border-top: 5px solid #44617d; border-bottom: 0; margin: 4px 0 0 5px; }
.cart { width: 90px; height: 45px; background: #3a7032; color: #fff; display: flex; align-items: center; padding-left: 7px; font-size: 12.300px; letter-spacing: -.3px; white-space: nowrap; }
.cart svg { width: 16px; height: 15px; margin-right: 1px; }
.main { flex: 1; padding: 0 45px 0 46px; display: flex; flex-direction: column; }
h1 { font-size: 28.800px; font-weight: 400; line-height: 40px; color: #004b8d; margin-top: 27px; white-space: nowrap; }
.alert { align-self: center; margin-right: 1px; text-align: center; border-radius: 3px; font-size: 13px; line-height: 18px; letter-spacing: -.02px; color: #222; box-shadow: 0 1px 2px rgba(0, 0, 0, .12); white-space: nowrap; }
.alert h2 { font-size: 13px; font-weight: 600; line-height: 18px; display: flex; justify-content: center; align-items: center; gap: 7px; }
.alert h2 svg { width: 16px; height: 16px; margin-top: -3px; }
.info { width: 719px; height: 82px; border: 1px solid #2472a8; margin-top: 34px; padding-top: 9px; }
.info p { padding-top: 7px; }
.steps { position: relative; display: grid; grid-template-columns: repeat(7, 1fr); height: 59px; margin-top: 13px; background: #004b8d; color: #fff; font-size: 12px; font-weight: 600; line-height: 16px; letter-spacing: -.2px; text-align: center; }
.steps span { display: flex; align-items: center; justify-content: center; }
.steps .on { background: #00305c; }
.stroke { position: absolute; left: 586px; top: 0; width: 54px; height: 38px; }
.ok { width: 675px; height: 61px; border: 1px solid #197d19; margin-top: 40px; padding-top: 8px; }
.ok p { padding-top: 6px; }
.actions { display: flex; justify-content: flex-end; padding-top: 40px; }
button { width: 155px; height: 34px; border: 0; border-bottom: 1px solid #003c72; background: #004b8d; color: #fff; font: 400 14.400px/20px "Open Sans", sans-serif; padding: 0; white-space: nowrap; }
.foot { height: 39px; flex: none; background: #004b8d; display: flex; justify-content: space-between; overflow: hidden; }
.small { padding-top: 20px; }
.small svg { width: 4px; height: 14px; margin: 0; }
.small .l1 { font-size: 4.500px; line-height: 5px; color: #e6edf4; margin-top: 2px; }
.small .l2 { font-size: 1.400px; line-height: 2px; color: #a9c2d8; margin-top: 0; }
.small .l3 { font-size: 6px; line-height: 6px; color: #fff; letter-spacing: 0; }
.small .l4 { font-size: 2px; line-height: 2px; color: #c8d8e6; margin-top: 1px; }
.insight { padding: 17px 14px 0 0; display: flex; flex-direction: column; align-items: flex-end; color: #dce7f1; font-size: 7px; line-height: 10px; letter-spacing: .1px; }
.insight strong { display: flex; align-items: center; gap: 1px; height: 12px; margin-top: -2px; }
.insight svg { width: 14px; height: 14px; }
.insight em { font: 700 10px/12px "DejaVu Sans", sans-serif; letter-spacing: .6px; margin-right: -.6px; }

/* Taskbar */
.taskbar { position: absolute; left: 0; right: 0; bottom: 0; height: 48px; border-top: 1px solid #4b4b4b; background: #1f1f1f; display: flex; align-items: center; color: #fff; }
.widget { width: 296px; display: flex; align-items: center; padding-left: 19px; }
.wicon { position: relative; margin-right: 7px; }
.wicon svg { width: 24px; height: 18px; margin-top: -4px; }
.wtext { display: flex; flex-direction: column; font-size: 11.500px; line-height: 16px; letter-spacing: -.04px; white-space: nowrap; }
.wtext span + span { color: #bdbdbd; }
.badge { position: absolute; width: 16px; height: 16px; border-radius: 50%; font-size: 10px; font-weight: 400; line-height: 16px; text-align: center; }
.red { background: #c42b1c; left: 11px; top: -13px; }
.blue { background: #4cc2ff; color: #111; left: 23px; top: 7px; }
.yellow { background: #ffc20e; left: 23px; top: 7px; }
.start { width: 23px; height: 23px; }
.search { width: 218px; height: 30px; margin-left: 14px; border-radius: 15px; background: #f2f2f2; display: flex; align-items: center; padding-left: 10px; color: #5c5c5c; font-size: 13px; letter-spacing: -.2px; }
.search svg { width: 16px; height: 16px; margin-right: 10px; }
.apps { display: flex; margin-left: 3px; }
.apps > span { position: relative; width: 44px; height: 48px; display: flex; align-items: center; justify-content: center; }
.apps svg { width: 24px; height: 24px; }
.apps > span:nth-child(8) svg { width: 22px; }
.run::after { content: ""; position: absolute; left: 19px; bottom: 5px; width: 6px; height: 3px; border-radius: 2px; background: #9a9a9a; }
.current::before { content: ""; position: absolute; inset: 4px 2px; border-radius: 4px; border: 1px solid #3a3a3a; background: #2d2d2d; }
.current svg { position: relative; }
.current::after { content: ""; position: absolute; left: 14px; bottom: 5px; width: 16px; height: 3px; border-radius: 2px; background: #4cc2ff; }
.hp { width: 24px; height: 24px; background: #0096d6; font: italic 400 7.500px/23px "Open Sans", sans-serif; letter-spacing: -.5px; text-align: center; }
.hp i { font-weight: 700; font-size: 11px; }
.help { width: 24px; height: 24px; border-radius: 50%; border: 2px solid #fff; background: #0c92d8; font-size: 18px; line-height: 20px; text-align: center; }
.cmd { width: 23px; height: 19px; background: #000; border: 1px solid #a5a5a5; border-top: 2px solid #d0d0d0; font-size: 7px; line-height: 9px; padding-left: 2px; }
.cmd i { font-style: normal; }
.apps > span:last-child { padding-right: 2px; }
.tray { margin-left: auto; display: flex; align-items: center; padding-right: 20px; }
.chev { width: 12px; height: 12px; margin-right: 18px; }
.cloud { width: 17px; height: 12px; margin-right: 15px; }
.air { width: 17px; height: 16px; margin-right: 7px; }
.vol { width: 17px; height: 14px; margin-right: 7px; }
.bat { width: 17px; height: 14px; }
.clock { width: 78px; display: flex; flex-direction: column; align-items: flex-end; font-size: 11.500px; line-height: 16px; letter-spacing: .02px; white-space: nowrap; }
.note { width: 15px; height: 15px; margin-left: 8px; border-radius: 50%; background: #4cc2ff; color: #111; font-size: 10px; font-weight: 400; line-height: 15px; text-align: center; }
```
